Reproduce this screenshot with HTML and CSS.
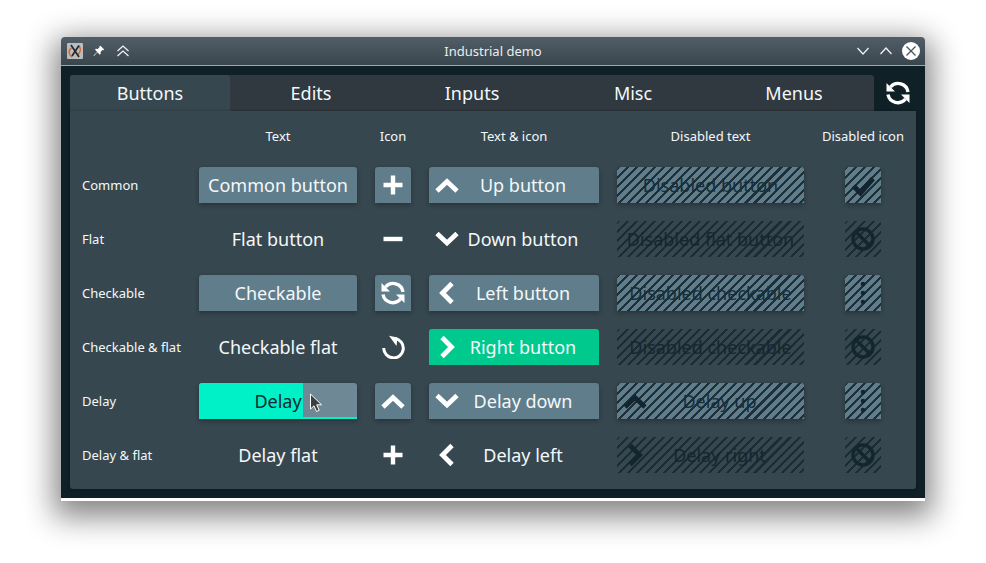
FILE: index.html
```html
<!DOCTYPE html>
<html lang="en">
<head>
<meta charset="utf-8">
<title>Industrial demo</title>
<link rel="stylesheet" href="styles.css">
</head>
<body>
<svg class="defs" width="0" height="0" aria-hidden="true">
  <defs>
    <symbol id="i-plus" viewBox="0 0 24 24"><path d="M12 2.500v19M2.500 12h19" fill="none" stroke="currentColor" stroke-width="4.400"/></symbol>
    <symbol id="i-minus" viewBox="0 0 24 24"><path d="M2.500 12h19" fill="none" stroke="currentColor" stroke-width="4.400"/></symbol>
    <symbol id="i-up" viewBox="0 0 24 24"><path d="M2 18l10-9.500L22 18" fill="none" stroke="currentColor" stroke-width="4.800"/></symbol>
    <symbol id="i-down" viewBox="0 0 24 24"><path d="M2 6.500l10 9.500 10-9.500" fill="none" stroke="currentColor" stroke-width="4.800"/></symbol>
    <symbol id="i-left" viewBox="0 0 24 24"><path d="M17 2.500L7.500 12l9.500 9.500" fill="none" stroke="currentColor" stroke-width="4.800"/></symbol>
    <symbol id="i-right" viewBox="0 0 24 24"><path d="M7 2.500l9.500 9.500L7 21.500" fill="none" stroke="currentColor" stroke-width="4.800"/></symbol>
    <symbol id="i-sync" viewBox="0 0 24 24"><path d="M4.500 6A10 10 0 0 1 22 11M2 13.500A10 10 0 0 0 19.500 18" fill="none" stroke="currentColor" stroke-width="3.400"/><path d="M.5 2v8.500H9zM23.500 22v-8.500H15z" fill="currentColor"/></symbol>
    <symbol id="i-timer" viewBox="0 0 24 24"><path d="M14 3.400A9.800 9.800 0 1 1 2.700 13" fill="none" stroke="currentColor" stroke-width="3"/><path d="M8 .8l8.500 1.700-1 8.500z" fill="currentColor"/></symbol>
    <symbol id="i-check" viewBox="0 0 24 24"><path d="M2.500 13l7 7L22 5.500" fill="none" stroke="currentColor" stroke-width="5"/></symbol>
    <symbol id="i-ban" viewBox="0 0 24 24"><circle cx="12" cy="12" r="10" fill="none" stroke="currentColor" stroke-width="3.400"/><path d="M5 5l14 14" stroke="currentColor" stroke-width="3.400"/></symbol>
    <symbol id="i-dots" viewBox="0 0 24 24"><circle cx="12" cy="3" r="2.300" fill="currentColor"/><circle cx="12" cy="12" r="2.300" fill="currentColor"/><circle cx="12" cy="21" r="2.300" fill="currentColor"/></symbol>
  </defs>
</svg>

<div class="window">
  <header class="titlebar">
    <div class="tb-group">
      <span class="app-icon"><svg viewBox="0 0 16 16" width="16" height="16"><rect width="16" height="16" rx="1" fill="#b9bdbe"/><path d="M5 14C1.500 12 1 7 4.500 5M12 3c2.500 3 1.500 7-2 9" fill="none" stroke="#d9692e" stroke-width="1.500"/><path d="M4 2l8 12M12 2.500L5 13" stroke="#23282c" stroke-width="1.700"/></svg></span>
      <svg class="tb-pin" viewBox="0 0 12 12" width="12" height="12"><path d="M7.500 .8l3.700 3.700-1 .8-.7-.3-2 2 .2 1.800-.9.900L4.400 7.300 1 11l-.5-.5 3.600-3.500L2 4.600l.9-.9 1.800.2 2-2-.3-.7z" fill="#fff"/></svg>
      <svg class="tb-above" viewBox="0 0 14 12" width="14" height="12"><path d="M1.500 6L7 1l5.500 5M1.500 11L7 6l5.500 5" fill="none" stroke="#f2f4f5" stroke-width="1.200"/></svg>
    </div>
    <div class="tb-title">Industrial demo</div>
    <div class="tb-group tb-right">
      <svg viewBox="0 0 14 10" width="14" height="10"><path d="M1.500 2L7 8l5.500-6" fill="none" stroke="#f2f4f5" stroke-width="1.200"/></svg>
      <svg viewBox="0 0 14 10" width="14" height="10"><path d="M1.500 8L7 2l5.500 6" fill="none" stroke="#f2f4f5" stroke-width="1.200"/></svg>
      <svg viewBox="0 0 18 18" width="18" height="18"><circle cx="9" cy="9" r="9" fill="#fff"/><path d="M4.500 4.500l9 9M13.500 4.500l-9 9" stroke="#46545c" stroke-width="1.300"/></svg>
    </div>
  </header>
  <main class="client">
    <div class="tabrow">
      <nav class="tabs">
        <div class="tab tab-active">Buttons</div>
        <div class="tab">Edits</div>
        <div class="tab">Inputs</div>
        <div class="tab">Misc</div>
        <div class="tab">Menus</div>
      </nav>
      <div class="corner"><svg class="ic-corner"><use href="#i-sync"/></svg></div>
    </div>
    <section class="panel">
      <div class="grid">
        <div></div>
        <div class="head">Text</div>
        <div class="head">Icon</div>
        <div class="head">Text &amp; icon</div>
        <div class="head">Disabled text</div>
        <div class="head">Disabled icon</div>

        <div class="label">Common</div>
        <button class="btn">Common button</button>
        <button class="btn square"><svg class="ic"><use href="#i-plus"/></svg></button>
        <button class="btn ti"><svg class="ic"><use href="#i-up"/></svg><span>Up button</span></button>
        <div class="btn dis"><span>Disabled button</span></div>
        <div class="dis-cell"><div class="btn dis square"><svg class="ic"><use href="#i-check"/></svg></div></div>

        <div class="label">Flat</div>
        <button class="btn flat">Flat button</button>
        <button class="btn flat square"><svg class="ic"><use href="#i-minus"/></svg></button>
        <button class="btn flat ti"><svg class="ic"><use href="#i-down"/></svg><span>Down button</span></button>
        <div class="btn dis flatdis"><span>Disabled flat button</span></div>
        <div class="dis-cell"><div class="btn dis flatdis square"><svg class="ic"><use href="#i-ban"/></svg></div></div>

        <div class="label">Checkable</div>
        <button class="btn">Checkable</button>
        <button class="btn square"><svg class="ic"><use href="#i-sync"/></svg></button>
        <button class="btn ti"><svg class="ic"><use href="#i-left"/></svg><span>Left button</span></button>
        <div class="btn dis"><span>Disabled checkable</span></div>
        <div class="dis-cell"><div class="btn dis square"><svg class="ic"><use href="#i-dots"/></svg></div></div>

        <div class="label">Checkable &amp; flat</div>
        <button class="btn flat">Checkable flat</button>
        <button class="btn flat square"><svg class="ic"><use href="#i-timer"/></svg></button>
        <button class="btn ti on"><svg class="ic"><use href="#i-right"/></svg><span>Right button</span></button>
        <div class="btn dis flatdis"><span>Disabled checkable</span></div>
        <div class="dis-cell"><div class="btn dis flatdis square"><svg class="ic"><use href="#i-ban"/></svg></div></div>

        <div class="label">Delay</div>
        <button class="btn delay">
          <span class="delay-fill"></span>
          <span class="delay-text">Delay</span>
          <svg class="cursor" viewBox="0 0 14 20" width="14" height="20"><path d="M1.500 1v15l3.500-3.200 2.500 5.700 2.700-1.200-2.500-5.500h4.800z" fill="#3d3d3d" stroke="#fff" stroke-width="1"/></svg>
        </button>
        <button class="btn square"><svg class="ic"><use href="#i-up"/></svg></button>
        <button class="btn ti"><svg class="ic"><use href="#i-down"/></svg><span>Delay down</span></button>
        <div class="btn dis ti"><svg class="ic"><use href="#i-up"/></svg><span>Delay up</span></div>
        <div class="dis-cell"><div class="btn dis square"><svg class="ic"><use href="#i-dots"/></svg></div></div>

        <div class="label">Delay &amp; flat</div>
        <button class="btn flat">Delay flat</button>
        <button class="btn flat square"><svg class="ic"><use href="#i-plus"/></svg></button>
        <button class="btn flat ti"><svg class="ic"><use href="#i-left"/></svg><span>Delay left</span></button>
        <div class="btn dis flatdis ti"><svg class="ic"><use href="#i-right"/></svg><span>Delay right</span></div>
        <div class="dis-cell"><div class="btn dis flatdis square"><svg class="ic"><use href="#i-ban"/></svg></div></div>
      </div>
    </section>
  </main>
  <div class="bottom-edge"></div>
</div>
</body>
</html>
```
FILE: styles.css
```css
* { box-sizing: border-box; }
html, body { margin: 0; height: 100%; }
body {
  width: 986px;
  height: 563px;
  overflow: hidden;
  background: #fff;
  padding: 37px 61px 0;
  font-family: "Noto Sans", sans-serif;
  color: #f4f8fa;
}
.defs { display: block; height: 0; }
.window {
  width: 864px;
  height: 464px;
  display: flex;
  flex-direction: column;
  border-radius: 4px 4px 0 0;
  background: #fff;
  box-shadow: 0 9px 30px 7px rgba(0,0,0,.48);
}
.titlebar {
  height: 29px;
  flex: none;
  display: flex;
  align-items: center;
  justify-content: space-between;
  padding: 0 5px 0 6px;
  position: relative;
  background: linear-gradient(#525e67, #3a464e);
  border-bottom: 1px solid #4fd3a0;
  border-radius: 4px 4px 0 0;
}
.tb-group { display: flex; align-items: center; gap: 10px; }
.tb-above { margin-left: 1px; }
.tb-right { gap: 9px; }
.app-icon { width: 16px; height: 16px; display: block; }
.app-icon svg { display: block; }
.tb-title {
  position: absolute;
  left: 0; right: 0;
  text-align: center;
  font-size: 13px;
  color: #e9edee;
  pointer-events: none;
}
.client {
  flex: 1;
  min-height: 0;
  background: #0f2027;
  padding: 9px;
  display: flex;
  flex-direction: column;
}
.tabrow { display: flex; height: 36px; flex: none; }
.tabs {
  width: 804px;
  display: grid;
  grid-template-columns: 160px repeat(4, 1fr);
  background: #2f393f;
  border-radius: 3px 3px 0 0;
}
.tab {
  display: flex;
  align-items: center;
  justify-content: center;
  font-size: 18px;
  color: #f4f8fa;
  padding-left: 1px;
}
.tab-active { background: #37474f; border-radius: 3px 3px 0 0; padding-left: 0; }
.corner { flex: 1; display: flex; align-items: center; justify-content: center; padding-left: 6px; }
.ic-corner { width: 24px; height: 24px; color: #fff; }
.panel {
  flex: 1;
  background: #37474f;
  border-radius: 0 0 3px 3px;
  padding: 11px 13px 16px 12px;
  box-shadow: 0 0 3px rgba(0,0,0,.3);
  width: 846px;
}
.grid {
  display: grid;
  grid-template-columns: 99px 158px 36px 170px 187px 81px;
  grid-template-rows: 27px repeat(6, 36px);
  column-gap: 18px;
  row-gap: 18px;
  align-items: center;
}
.head { font-size: 13px; text-align: center; color: #f4f8fa; white-space: nowrap; }
.label { font-size: 13px; color: #f4f8fa; white-space: nowrap; }
.btn {
  position: relative;
  height: 36px;
  border: 0;
  padding: 0;
  margin: 0;
  display: flex;
  align-items: center;
  justify-content: center;
  font: inherit;
  font-size: 18px;
  color: #f4f8fa;
  background: #607d8b;
  border-radius: 3px 3px 0 0;
  box-shadow: 0 2px 5px rgba(0,0,0,.3);
  white-space: nowrap;
}
.btn.flat { background: transparent; box-shadow: none; }
.square { width: 36px; }
.ic { width: 24px; height: 24px; color: #fff; flex: none; }
.ti { padding: 0 12px 0 6px; }
.ti span { flex: 1; text-align: center; }
.on { background: #00c98d; box-shadow: none; }
.delay { overflow: hidden; background: #6f8896; }
.delay-fill {
  position: absolute;
  left: 0; top: 0; bottom: 0;
  width: 104px;
  background: #00f0c8;
}
.delay::after {
  content: "";
  position: absolute;
  left: 104px; right: 0; bottom: 0;
  height: 2px;
  background: #00f0c8;
}
.delay-text { position: relative; color: #0c2a30; }
.cursor { position: absolute; left: 110px; top: 10px; z-index: 1; }
.dis {
  color: #142f3d;
  background-color: #607d8b;
  overflow: hidden;
}
.dis::before {
  content: "";
  position: absolute;
  inset: 0;
  background: repeating-linear-gradient(135deg, #1c2b33 0 2.200px, transparent 2.200px 6.400px);
  opacity: .95;
}
.dis span, .dis svg { position: relative; }
.dis .ic { color: #13262f; }
.flatdis { background-color: transparent; box-shadow: none; color: #15262f; }
.dis-cell { display: flex; justify-content: center; }
.bottom-edge { height: 3px; flex: none; background: #fff; }
```
